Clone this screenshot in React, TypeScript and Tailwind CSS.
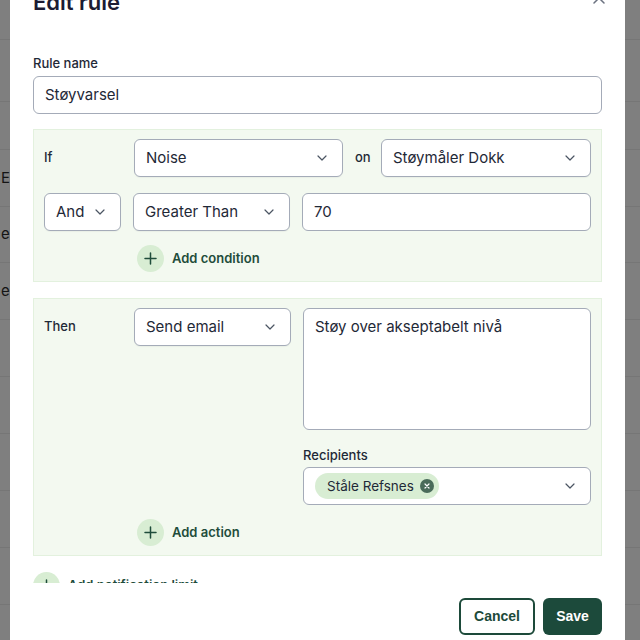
import React from "react";

const Chevron = () => (
  <svg width="10" height="6" viewBox="0 0 10 6" fill="none" stroke="#4b5563" strokeWidth="1.2" strokeLinecap="round" strokeLinejoin="round">
    <path d="M1 1 5 5 9 1" />
  </svg>
);

const Plus = () => (
  <svg width="13" height="13" viewBox="0 0 13 13" fill="none" stroke="#1f4d3b" strokeWidth="1.5" strokeLinecap="round">
    <path d="M6.5 1v11M1 6.5h11" />
  </svg>
);

function Select({ text, className }: { text: string; className: string }) {
  return (
    <div className={"flex h-[38px] shrink-0 items-center justify-between rounded-[6px] border border-[#a4abb8] bg-white pl-[11px] pr-[15px] text-[15px] text-[#1f2937] shadow-[0_1px_1px_rgba(0,0,0,0.04)] " + className}>
      <span>{text}</span>
      <Chevron />
    </div>
  );
}

function AddRow({ text, className }: { text: string; className: string }) {
  return (
    <div className={"flex h-[27px] items-center gap-[8px] " + className}>
      <div className="flex h-[27px] w-[27px] items-center justify-center rounded-full bg-[#d8edd3]">
        <Plus />
      </div>
      <span className="text-[13px] font-semibold text-[#1f4d3b]">{text}</span>
    </div>
  );
}

export default function App() {
  const bgRows = [
    { h: "h-[40px]", t: "" },
    { h: "h-[62px]", t: "" },
    { h: "h-[48px]", t: "" },
    { h: "h-[57px]", t: "El" },
    { h: "h-[56px]", t: "e" },
    { h: "h-[57px]", t: "e" },
    { h: "h-[57px]", t: "" },
    { h: "h-[57px]", t: "" },
    { h: "h-[57px]", t: "" },
    { h: "h-[57px]", t: "" },
    { h: "h-[57px]", t: "" },
    { h: "h-[57px]", t: "" },
  ];
  return (
    <div className="relative h-[640px] w-[640px] overflow-hidden bg-[#7f7f7f] font-['Inter',sans-serif]">
      <div className="flex flex-col">
        {bgRows.map((r, i) => (
          <div key={i} className={"flex items-center border-b border-[#767676] text-[15px] text-[#141414] " + r.h}>
            <span className="pl-[1px]">{r.t}</span>
          </div>
        ))}
      </div>

      <div className="absolute left-[10px] top-[-26px] flex h-[666px] w-[615px] flex-col bg-white">
        <div className="flex h-[43px] shrink-0 items-start justify-between px-[23px] pt-[12px]">
          <h2 className="text-[22px] font-semibold leading-[32px] text-[#1b1b33]">Edit rule</h2>
          <svg className="mr-[-5px] mt-[4px]" width="16" height="16" viewBox="0 0 16 16" fill="none" stroke="#6b7280" strokeWidth="1.5" strokeLinecap="round">
            <path d="M3 3l10 10M13 3 3 13" />
          </svg>
        </div>

        <div className="flex h-[566px] shrink-0 flex-col overflow-hidden px-[23px] pt-[36px]">
          <label className="h-[20px] text-[13px] font-medium leading-[20px] text-[#1f2937]">Rule name</label>
          <div className="mt-[3px] flex h-[38px] shrink-0 items-center rounded-[6px] border border-[#a4abb8] px-[11px] text-[15px] text-[#1f2937]">
            Støyvarsel
          </div>

          <div className="mt-[15px] flex flex-col border border-[#e3f1de] bg-[#f3f9f0] pl-[10px] pr-[10px] pt-[9px] pb-[9px]">
            <div className="flex h-[38px] items-center">
              <span className="w-[90px] shrink-0 text-[13px] font-medium text-[#1f2937]">If</span>
              <Select text="Noise" className="w-[209px]" />
              <span className="w-[38px] shrink-0 pl-[12px] text-[13px] font-medium text-[#1f2937]">on</span>
              <Select text="Støymåler Dokk" className="w-[210px]" />
            </div>
            <div className="mt-[16px] flex h-[38px] items-center gap-[12px]">
              <Select text="And" className="w-[77px]" />
              <Select text="Greater Than" className="w-[157px]" />
              <div className="flex h-[38px] flex-1 items-center rounded-[6px] border border-[#a4abb8] bg-white px-[11px] text-[15px] text-[#1f2937]">
                70
              </div>
            </div>
            <AddRow text="Add condition" className="ml-[93px] mt-[14px]" />
          </div>

          <div className="mt-[16px] flex flex-col border border-[#e3f1de] bg-[#f3f9f0] pl-[10px] pr-[10px] pt-[9px] pb-[9px]">
            <div className="flex items-start">
              <span className="flex h-[38px] w-[90px] shrink-0 items-center text-[13px] font-medium text-[#1f2937]">Then</span>
              <Select text="Send email" className="w-[157px]" />
              <div className="ml-[12px] flex flex-1 flex-col">
                <div className="h-[122px] rounded-[6px] border border-[#a4abb8] bg-white px-[11px] pt-[6px] text-[15px] leading-[24px] text-[#1f2937]">
                  Støy over akseptabelt nivå
                </div>
                <label className="mt-[15px] h-[20px] text-[13px] font-medium leading-[20px] text-[#1f2937]">Recipients</label>
                <div className="mt-[2px] flex h-[38px] items-center justify-between rounded-[6px] border border-[#a4abb8] bg-white pl-[11px] pr-[15px]">
                  <div className="flex h-[26px] items-center gap-[6px] rounded-full bg-[#d8edd3] pl-[12px] pr-[5px] text-[13.5px] text-[#1f2937]">
                    <span>Ståle Refsnes</span>
                    <span className="flex h-[14px] w-[14px] items-center justify-center rounded-full bg-[#4a6b5a]">
                      <svg width="6" height="6" viewBox="0 0 6 6" stroke="white" strokeWidth="1.2" strokeLinecap="round">
                        <path d="M1 1l4 4M5 1 1 5" />
                      </svg>
                    </span>
                  </div>
                  <Chevron />
                </div>
              </div>
            </div>
            <AddRow text="Add action" className="ml-[93px] mt-[14px]" />
          </div>

          <AddRow text="Add notification limit" className="mt-[16px] shrink-0" />
        </div>

        <div className="flex h-[57px] shrink-0 items-start justify-end gap-[8px] px-[23px] pt-[15px]">
          <button className="flex h-[37px] w-[76px] items-center justify-center rounded-[6px] border-2 border-[#1d4a3a] bg-white font-['Liberation_Sans',sans-serif] text-[14px] font-bold text-[#1d4a3a]">
            Cancel
          </button>
          <button className="flex h-[37px] w-[59px] items-center justify-center rounded-[6px] bg-[#1c4a3b] font-['Liberation_Sans',sans-serif] text-[14px] font-bold text-white">
            Save
          </button>
        </div>
      </div>
    </div>
  );
}
